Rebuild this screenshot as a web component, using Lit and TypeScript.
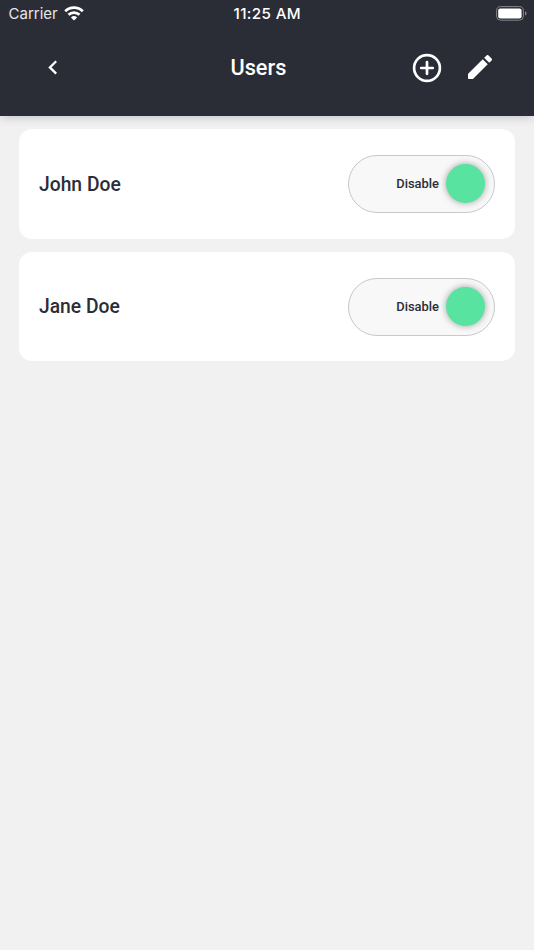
import { LitElement, html, css } from "lit";
import { customElement, property } from "lit/decorators.js";

@customElement("status-bar")
class StatusBar extends LitElement {
  static styles = css`
    :host { display: grid; grid-template-columns: 1fr auto 1fr; align-items: center; height: 27px; padding: 0 7px 0 8.5px; font-family: Inter, "Liberation Sans", sans-serif; color: #fff; box-sizing: border-box; }
    .carrier { display: flex; align-items: center; gap: 6px; font-size: 15px; color: #e6e6e9; }
    .time { font-size: 15.2px; font-weight: 550; letter-spacing: 0.35px; margin-right: 1px; }
    .battery { justify-self: end; }
    svg { display: block; margin-top: -1px; }
  `;
  render() {
    return html`
      <div class="carrier"><span>Carrier</span>
        <svg width="20" height="15" viewBox="0 0 20 15" fill="none" stroke="#fff" stroke-width="2.7">
          <path d="M1.2 5.3a12.6 12.6 0 0 1 17.6 0M4.5 8.8a7.9 7.9 0 0 1 11 0"/>
          <path d="M10 14.6L6.9 11.5a4.5 4.5 0 0 1 6.2 0z" fill="#fff" stroke="none"/>
        </svg>
      </div>
      <div class="time">11:25 AM</div>
      <svg class="battery" width="31" height="15" viewBox="0 0 31 15">
        <rect x=".6" y=".6" width="26.8" height="13.6" rx="4" fill="none" stroke="#85868b" stroke-width="1"/>
        <rect x="2.2" y="2.4" width="23.4" height="10" rx="2.2" fill="#fff"/>
        <path d="M29 5.2q1.6.6 1.6 2.2T29 9.6z" fill="#85868b"/>
      </svg>`;
  }
}

@customElement("user-card")
class UserCard extends LitElement {
  @property() name = "";
  static styles = css`
    :host { display: flex; align-items: center; justify-content: space-between; height: 109.6px; box-sizing: border-box; padding: 0 20px; border-radius: 13px; background: #fff; }
    .name { font-size: 19.3px; font-weight: 500; color: #2b2d37; padding-top: 0.4px; }
    .toggle { display: flex; align-items: center; justify-content: flex-end; gap: 7px; box-sizing: border-box; width: 147px; height: 58px; padding: 0 9px; border: 1px solid #c8c8c8; border-radius: 29px; background: #f8f8f8; }
    .label { font-size: 12.9px; font-weight: 500; color: #2b2d37; padding-bottom: 0.6px; }
    .knob { width: 39px; height: 39px; border-radius: 50%; background: #59e3a0; box-shadow: 0 0 7px rgba(0, 0, 0, 0.36); }
  `;
  render() {
    return html`<span class="name">${this.name}</span>
      <div class="toggle"><span class="label">Disable</span><span class="knob"></span></div>`;
  }
}

@customElement("app-root")
class AppRoot extends LitElement {
  static styles = css`
    :host { display: block; min-height: 950px; background: #f1f1f1; font-family: Roboto, "Liberation Sans", sans-serif; }
    .header { height: 116px; background: #2b2d36; color: #fff; box-sizing: border-box; box-shadow: 0 2px 9px -1px rgba(50, 45, 75, 0.25); }
    .nav { display: grid; grid-template-columns: 184.5px auto 1fr; align-items: center; height: 81px; padding: 0 38px 0 46px; }
    .title { font-size: 21.7px; font-weight: 500; }
    .actions { display: flex; align-items: center; justify-content: flex-end; gap: 22px; }
    .list { display: flex; flex-direction: column; gap: 13px; padding: 13.2px 19px; }
    .edit { margin-top: -1px; }
    svg { display: block; }
  `;
  render() {
    return html`
      <header class="header">
        <status-bar></status-bar>
        <nav class="nav">
          <svg width="14" height="16" viewBox="0 0 14 16" fill="none" stroke="#fff" stroke-width="2.3"><path d="M10.2 1.2L3.9 7.4l6.3 6.2"/></svg>
          <span class="title">Users</span>
          <div class="actions">
            <svg width="30" height="30" viewBox="0 0 30 30" fill="none" stroke="#fff" stroke-width="2.7" stroke-linecap="round"><circle cx="15" cy="15" r="12.9"/><path d="M15 9.2v11.6M9.2 15h11.6"/></svg>
            <svg class="edit" width="32" height="32" viewBox="0 0 24 24" fill="#fff"><path d="M3 17.46v3.04c0 .28.22.5.5.5h3.04c.13 0 .26-.05.35-.15L17.81 9.94l-3.75-3.75L3.15 17.1c-.1.1-.15.22-.15.36zM20.71 7.04c.39-.39.39-1.02 0-1.41l-2.34-2.34c-.39-.39-1.02-.39-1.41 0l-1.83 1.83 3.75 3.75 1.83-1.83z"/></svg>
          </div>
        </nav>
      </header>
      <main class="list">
        <user-card name="John Doe"></user-card>
        <user-card name="Jane Doe"></user-card>
      </main>`;
  }
}
